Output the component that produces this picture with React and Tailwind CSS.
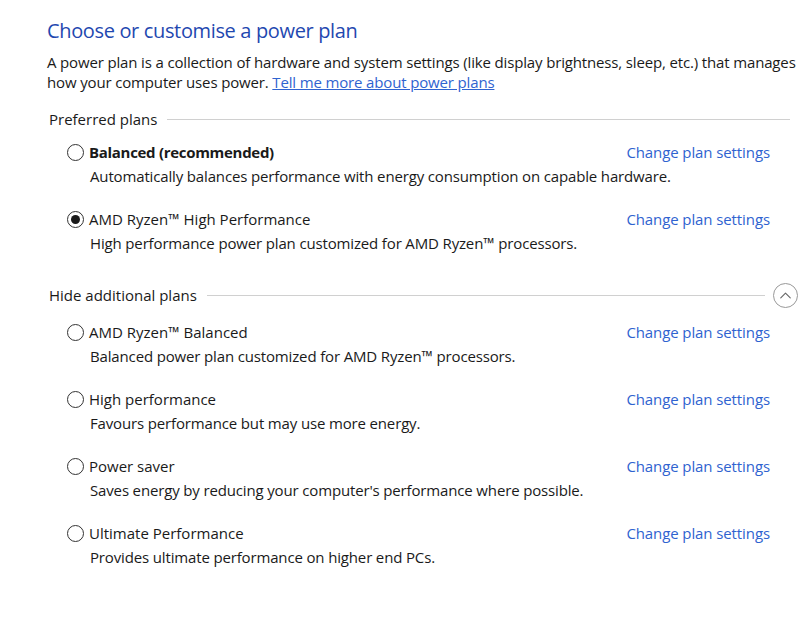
import { ChevronUp } from 'lucide-react'

const PREFERRED = [
  { name: 'Balanced (recommended)', desc: 'Automatically balances performance with energy consumption on capable hardware.', bold: true },
  { name: 'AMD Ryzen™ High Performance', desc: 'High performance power plan customized for AMD Ryzen™ processors.', selected: true },
]

const ADDITIONAL = [
  { name: 'AMD Ryzen™ Balanced', desc: 'Balanced power plan customized for AMD Ryzen™ processors.' },
  { name: 'High performance', desc: 'Favours performance but may use more energy.' },
  { name: 'Power saver', desc: "Saves energy by reducing your computer's performance where possible." },
  { name: 'Ultimate Performance', desc: 'Provides ultimate performance on higher end PCs.' },
]

function Radio({ selected }) {
  return (
    <span className="w-[17px] h-[17px] rounded-full border border-[#333] bg-white flex items-center justify-center shrink-0">
      {selected && <span className="w-[9px] h-[9px] rounded-full bg-[#1a1a1a]" />}
    </span>
  )
}

function Plan({ plan, first }) {
  return (
    <div className={first ? '' : 'mt-[19px]'}>
      <div className="flex items-center h-6 pl-5 pr-[33px]">
        <Radio selected={plan.selected} />
        <span className={`ml-[5px] flex-1 ${plan.bold ? 'font-bold tracking-[-0.3px]' : ''}`}>{plan.name}</span>
        <a className="text-[#2f63d0] cursor-pointer tracking-[-0.1px]">Change plan settings</a>
      </div>
      <p className="h-6 leading-6 pl-[43px] tracking-[-0.15px]">{plan.desc}</p>
    </div>
  )
}

export default function App() {
  return (
    <div
      className="w-[803px] h-[620px] bg-white text-[#1a1a1a] text-[15px] pl-[47px] pt-[17px] overflow-hidden"
      style={{ fontFamily: '"Open Sans", "Noto Sans", sans-serif' }}
    >
      <h1 className="text-[20px] leading-7 text-[#1f48b0] tracking-[-0.35px]">Choose or customise a power plan</h1>
      <p className="mt-[7px] leading-5 pr-1 tracking-[-0.15px]">
        A power plan is a collection of hardware and system settings (like display brightness, sleep, etc.) that manages
        how your computer uses power.{' '}
        <a className="text-[#2f63d0] underline cursor-pointer">Tell me more about power plans</a>
      </p>

      <div className="mt-[15px] flex items-center h-6 pl-[2px] pr-[13px]">
        <span>Preferred plans</span>
        <div className="flex-1 h-px bg-[#d0d0d0] ml-[10px]" />
      </div>
      <div className="mt-[9px]">
        {PREFERRED.map((p, i) => <Plan key={p.name} plan={p} first={i === 0} />)}
      </div>

      <div className="mt-[28px] flex items-center h-6 pl-[2px]">
        <span>Hide additional plans</span>
        <div className="flex-1 h-px bg-[#d0d0d0] ml-[10px]" />
        <span className="ml-[8px] mr-[5px] w-[25px] h-[25px] rounded-full border border-[#999] flex items-center justify-center text-[#666]">
          <ChevronUp size={19} strokeWidth={1.4} />
        </span>
      </div>
      <div className="mt-[13px]">
        {ADDITIONAL.map((p, i) => <Plan key={p.name} plan={p} first={i === 0} />)}
      </div>
    </div>
  )
}
